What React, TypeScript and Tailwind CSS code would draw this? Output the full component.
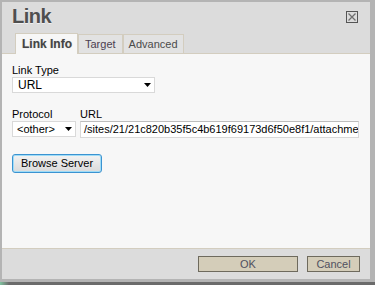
const font = { fontFamily: '"Liberation Sans", Arial, sans-serif' };

function Arrow() {
  return (
    <svg width="7" height="4" viewBox="0 0 7 4" className="block">
      <path d="M0 0H7L3.5 4Z" fill="#000" />
    </svg>
  );
}

export default function App() {
  return (
    <div className="flex h-[285px] w-[375px] flex-col bg-[#6b6b6b]" style={font}>
      <div className="flex h-[282px] w-[375px] flex-col border-b-[3px] border-l-2 border-r-[5px] border-t-2 border-[#b4b4b4] bg-[#dcdcdc]">
        {/* title */}
        <div className="flex h-[31px] shrink-0 items-start justify-between pl-[10px] pr-[12px]">
          <h1 className="mt-[3px] text-[20px] font-bold leading-[23px] tracking-[-0.5px] text-[#4f4f4f] [text-shadow:0_1px_0_#f0f0f0]">
            Link
          </h1>
          <button className="mt-[9px] flex h-[12px] w-[12px] items-center justify-center border border-[#555] bg-[#dcdcdc]">
            <svg width="8" height="8" viewBox="0 0 8 8">
              <path d="M0.5 0.5L7.5 7.5M7.5 0.5L0.5 7.5" stroke="#6f6f6f" strokeWidth="1.3" />
            </svg>
          </button>
        </div>

        {/* tabs */}
        <div className="flex h-[21px] shrink-0 items-end border-b border-[#d3cdbf] pl-[13px] text-[11px]">
          <div className="-mb-px flex h-[21px] items-center border border-b-0 border-[#d3cdbf] bg-[#f7f7f7] pl-[6px] pr-[5px] text-[12px] font-bold text-[#444] [text-shadow:0_0_1px_#bbb]">
            Link Info
          </div>
          <div className="flex h-[19px] items-center border border-b-0 border-[#d3cdbf] bg-[#e2e2e2] px-[6px] text-[#4b4050]">
            Target
          </div>
          <div className="flex h-[19px] items-center border border-b-0 border-[#d3cdbf] bg-[#e2e2e2] px-[5px] text-[#4b4b4b]">
            Advanced
          </div>
        </div>

        {/* content */}
        <div className="flex flex-1 flex-col bg-[#f7f7f7] pl-[10px] pr-[11px] pt-[10px] text-[11px] leading-[13px] text-black">
          <label className="block">Link Type</label>
          <div className="flex h-[16px] w-[143px] items-center justify-between border border-[#d9d9d9] bg-white pl-[5px] pr-[3px] text-[12px]">
            <span>URL</span>
            <Arrow />
          </div>

          <div className="mt-[15px] flex gap-[4px]">
            <div className="flex w-[64px] flex-col">
              <label>Protocol</label>
              <div className="flex h-[16px] items-center justify-between border border-[#d9d9d9] bg-white pl-[4px] pr-[3px]">
                <span>&lt;other&gt;</span>
                <Arrow />
              </div>
            </div>
            <div className="flex min-w-0 flex-1 flex-col">
              <label>URL</label>
              <div className="h-[17px] overflow-hidden whitespace-nowrap border border-[#d9d9d9] border-t-[#bdbdbd] bg-white pl-[3px] leading-[15px]">
                /sites/21/21c820b35f5c4b619f69173d6f50e8f1/attachments/
              </div>
            </div>
          </div>

          <button className="mt-[16px] flex h-[19px] w-[90px] items-center justify-center rounded-[3px] border border-[#3b93d1] bg-gradient-to-b from-[#f3f3f3] to-[#dadada] text-[11px] text-black shadow-[inset_0_0_0_1px_#9fdcf7]">
            Browse Server
          </button>
        </div>

        {/* footer */}
        <div className="flex h-[31px] shrink-0 items-start justify-end gap-[9px] border-t border-[#d3cdbf] bg-[#dcdcdc] pr-[10px] pt-[7px] text-[11px] text-[#505060]">
          <button className="flex h-[16px] w-[100px] items-center justify-center border border-[#6e6a5d] bg-[#d4cdb9]">
            OK
          </button>
          <button className="flex h-[16px] w-[53px] items-center justify-center border border-[#6e6a5d] bg-[#d4cdb9]">
            Cancel
          </button>
        </div>
      </div>
      <div className="flex flex-1">
        <div className="w-[9px] bg-gradient-to-r from-[#7fc3a0] to-[#6b6b6b]" />
      </div>
    </div>
  );
}
